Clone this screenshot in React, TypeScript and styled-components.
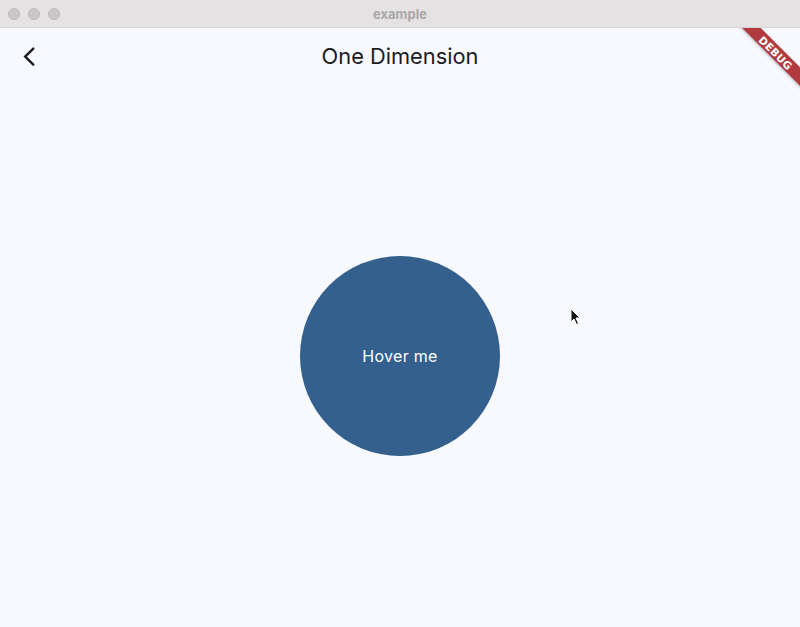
import React from "react";
import styled, { createGlobalStyle } from "styled-components";

const Global = createGlobalStyle`
  html, body { margin: 0; padding: 0; }
  body { width: 800px; height: 627px; overflow: hidden; font-family: "Inter", "Roboto", "Liberation Sans", sans-serif; }
`;

const Window = styled.div`
  position: relative;
  width: 800px;
  height: 627px;
  display: flex;
  flex-direction: column;
  background: #f8f9ff;
  overflow: hidden;
`;

const TitleBar = styled.div`
  height: 28px;
  flex: 0 0 28px;
  background: #e4e2e2;
  border-bottom: 1px solid #d6d4d4;
  box-sizing: border-box;
  display: flex;
  align-items: center;
  position: relative;
  padding-left: 8px;
  gap: 8px;
`;

const Light = styled.span`
  width: 12px;
  height: 12px;
  border-radius: 50%;
  background: #c8c6c6;
  border: 0.5px solid #bdbbbb;
  box-sizing: border-box;
`;

const WindowTitle = styled.div`
  position: absolute;
  left: 0;
  right: 0;
  top: 0;
  height: 28px;
  line-height: 28px;
  text-align: center;
  font-family: "Inter", "Liberation Sans", sans-serif;
  font-weight: 700;
  font-size: 13px;
  color: #a9a7a7;
`;

const Content = styled.div`
  position: relative;
  flex: 1;
  display: flex;
  flex-direction: column;
  overflow: hidden;
`;

const AppBar = styled.div`
  height: 56px;
  flex: 0 0 56px;
  display: flex;
  align-items: center;
  position: relative;
  padding-left: 16px;
`;

const BackButton = styled.button`
  width: 24px;
  height: 24px;
  border: none;
  background: none;
  padding: 0;
  display: flex;
  align-items: center;
  justify-content: center;
  color: #1b1b1f;
`;

const PageTitle = styled.div`
  position: absolute;
  left: 0;
  right: 0;
  text-align: center;
  font-family: "Inter", "Liberation Sans", sans-serif;
  font-size: 21.8px;
  color: #1a1c1e;
  pointer-events: none;
`;

const Body = styled.div`
  flex: 1;
  display: flex;
  align-items: center;
  justify-content: center;
`;

const Circle = styled.div`
  width: 200px;
  height: 200px;
  border-radius: 50%;
  background: #34608d;
  display: flex;
  align-items: center;
  justify-content: center;
  color: #ffffff;
  font-family: "Inter", "Liberation Sans", sans-serif;
  font-size: 16px;
  letter-spacing: 0.3px;
`;

const Banner = styled.div`
  position: absolute;
  top: 18px;
  right: -32px;
  width: 112px;
  height: 13px;
  background: #b13a3e;
  transform: rotate(45deg);
  transform-origin: center;
  display: flex;
  align-items: center;
  justify-content: center;
  color: #fff;
  font-family: "DejaVu Sans", "Liberation Sans", sans-serif;
  font-weight: 700;
  font-size: 10.5px;
  letter-spacing: 0.3px;
  box-shadow: 0 1px 3px rgba(0,0,0,0.3);
`;

const Cursor = styled.svg`
  position: absolute;
  left: 570px;
  top: 280px;
`;

export default function App() {
  return (
    <>
      <Global />
      <Window>
        <TitleBar>
          <Light />
          <Light />
          <Light />
          <WindowTitle>example</WindowTitle>
        </TitleBar>
        <Content>
          <AppBar>
            <BackButton aria-label="Back">
              <svg width="24" height="24" viewBox="0 0 24 24" fill="none">
                <path d="M17.3 4.6 L9.2 12.6 L17.3 20.6" stroke="#1b1b1f" strokeWidth="2.4" strokeLinecap="round" strokeLinejoin="miter" />
              </svg>
            </BackButton>
            <PageTitle>One Dimension</PageTitle>
          </AppBar>
          <Body>
            <Circle>Hover me</Circle>
          </Body>
          <Banner>DEBUG</Banner>
          <Cursor width="12" height="18" viewBox="0 0 12 18">
            <path d="M1 1 L1 14 L4 11 L6.5 16.5 L8.5 15.5 L6 10 L10 10 Z" fill="#111" stroke="#fff" strokeWidth="1" />
          </Cursor>
        </Content>
      </Window>
    </>
  );
}
